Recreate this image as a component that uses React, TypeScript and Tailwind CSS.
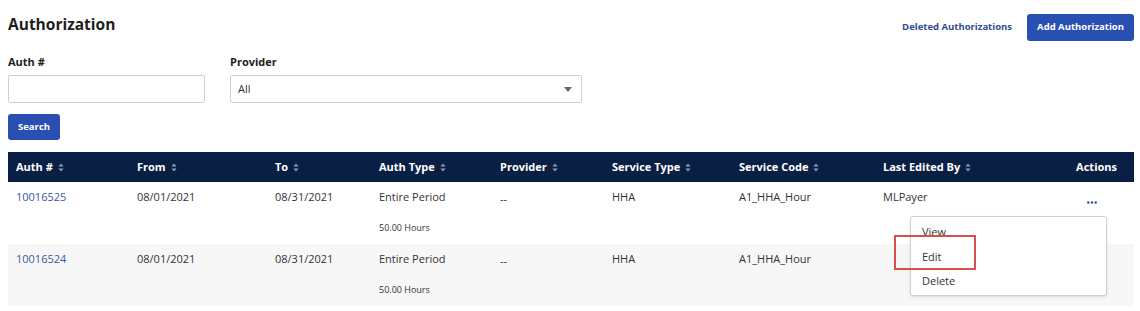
import React from 'react';

const font = "font-['Open_Sans','Liberation_Sans',sans-serif]";

const SortIcon = () => (
  <svg width="6" height="9" viewBox="0 0 6 9" className="ml-[5px] inline-block">
    <path d="M3 0.5 L5.6 3.6 H0.4 Z" fill="#8d9bb3" />
    <path d="M3 8.5 L5.6 5.4 H0.4 Z" fill="#8d9bb3" />
  </svg>
);

const cols = 'grid grid-cols-[121px_138px_104px_121px_112px_127px_144px_1fr_90px]';

const headers = ['Auth #', 'From', 'To', 'Auth Type', 'Provider', 'Service Type', 'Service Code', 'Last Edited By'];

const rows = [
  { id: '10016525', from: '08/01/2021', to: '08/31/2021', type: 'Entire Period', hours: '50.00 Hours', provider: '--', service: 'HHA', code: 'A1_HHA_Hour', editedBy: 'MLPayer', actions: true },
  { id: '10016524', from: '08/01/2021', to: '08/31/2021', type: 'Entire Period', hours: '50.00 Hours', provider: '--', service: 'HHA', code: 'A1_HHA_Hour', editedBy: '', actions: false },
];

export default function App() {
  return (
    <div className={`relative w-[1140px] h-[311px] bg-white text-[#333] ${font}`}>
      <div className="flex items-start justify-between pl-2 pr-[6px] pt-[13px]">
        <h1 className="text-[15.5px] font-bold leading-[22px] text-[#1e1e1e]">Authorization</h1>
        <div className="flex items-center gap-[15px] pt-px">
          <a className="text-[9.5px] font-bold text-[#2f4c94]">Deleted Authorizations</a>
          <button className="h-[27px] w-[107px] rounded-[3px] bg-[#2a4fb2] text-white text-[9.5px] font-bold">
            Add Authorization
          </button>
        </div>
      </div>

      <div className="flex gap-[25px] pl-2 mt-[13px]">
        <div className="flex flex-col">
          <label className="text-[11px] font-bold leading-[16px] text-[#222] mb-[5px]">Auth #</label>
          <input className="w-[197px] h-[28px] border border-[#cfcfcf] rounded-[2px] bg-white" />
        </div>
        <div className="flex flex-col">
          <label className="text-[11px] font-bold leading-[16px] text-[#222] mb-[5px]">Provider</label>
          <div className="w-[352px] h-[28px] border border-[#cfcfcf] rounded-[2px] bg-white flex items-center justify-between pl-[7px] pr-[9px]">
            <span className="text-[11px] text-[#333]">All</span>
            <svg width="8" height="5" viewBox="0 0 8 5"><path d="M0 0 H8 L4 5 Z" fill="#666" /></svg>
          </div>
        </div>
      </div>

      <div className="flex pl-2 mt-[11px]">
        <button className="h-[26px] w-[52px] rounded-[3px] bg-[#2a4fb2] text-white text-[9.5px] font-bold">Search</button>
      </div>

      <div className="ml-2 mr-[6px] mt-[12px]">
        <div className={`${cols} h-[30px] items-center bg-[#0a1f44] text-white text-[11px] font-bold`}>
          {headers.map((h) => (
            <div key={h} className="pl-2 flex items-center">
              {h}
              <SortIcon />
            </div>
          ))}
          <div className="text-right pr-[17px]">Actions</div>
        </div>
        {rows.map((r, i) => (
          <div key={r.id} className={`${cols} h-[62px] text-[11px] ${i % 2 ? 'bg-[#f7f7f7]' : 'bg-white'}`}>
            <div className="pl-2 pt-[7px] text-[#3a5a9c]">{r.id}</div>
            <div className="pl-2 pt-[7px]">{r.from}</div>
            <div className="pl-2 pt-[7px]">{r.to}</div>
            <div className="pl-2 pt-[7px] flex flex-col">
              <span>{r.type}</span>
              <span className="text-[9px] mt-[15px]">{r.hours}</span>
            </div>
            <div className="pl-2 pt-[9px]">{r.provider}</div>
            <div className="pl-2 pt-[7px]">{r.service}</div>
            <div className="pl-2 pt-[7px]">{r.code}</div>
            <div className="pl-2 pt-[7px]">{r.editedBy}</div>
            <div className="pt-[19px] pr-[37px] flex justify-end">
              {r.actions && (
                <svg width="10" height="3" viewBox="0 0 10 3">
                  <circle cx="1.3" cy="1.5" r="1.2" fill="#2f4c94" />
                  <circle cx="5" cy="1.5" r="1.2" fill="#2f4c94" />
                  <circle cx="8.7" cy="1.5" r="1.2" fill="#2f4c94" />
                </svg>
              )}
            </div>
          </div>
        ))}
      </div>

      <div className="absolute left-[910px] top-[216px] w-[197px] h-[80px] bg-white border border-[#d0d0d0] rounded-[3px] shadow-sm flex flex-col pl-[11px] pt-[3px] text-[11px] text-[#333]">
        <span className="leading-[24.5px]">View</span>
        <span className="leading-[24.5px]">Edit</span>
        <span className="leading-[24.5px]">Delete</span>
      </div>
      <div className="absolute left-[894px] top-[235px] w-[82px] h-[35px] border-2 border-[#d4504c]" />
    </div>
  );
}
